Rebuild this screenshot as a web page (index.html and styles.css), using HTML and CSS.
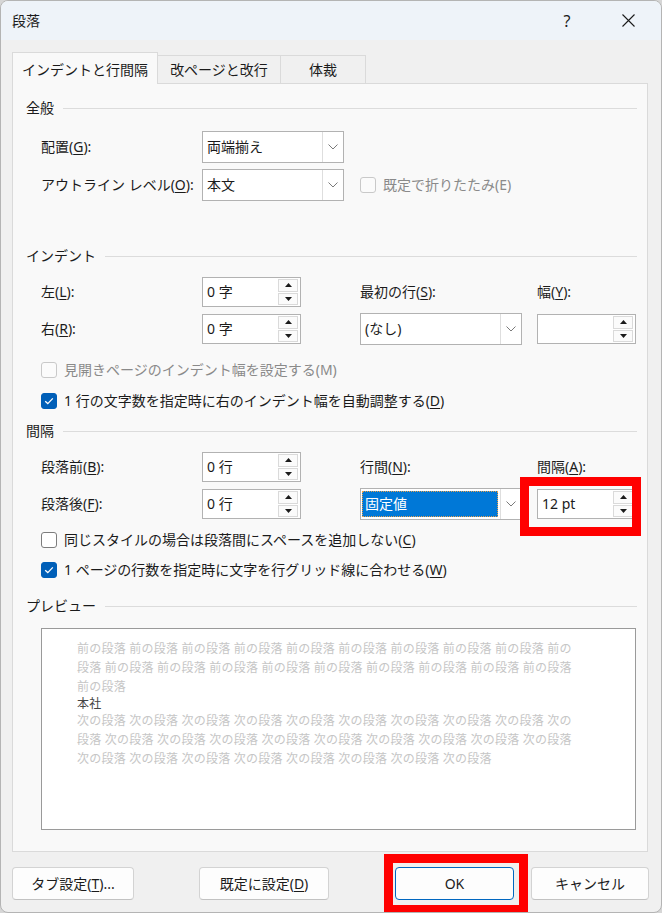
FILE: index.html
```html
<!DOCTYPE html>
<html lang="ja">
<head>
<meta charset="utf-8">
<title>段落</title>
<link rel="stylesheet" href="styles.css">
</head>
<body>
<div class="window">
  <div class="titlebar">
    <span class="title">段落</span>
    <span class="help">?</span>
    <span class="close"><svg width="13" height="13" viewBox="0 0 13 13"><path d="M0.5 0.5L12.5 12.5M12.5 0.5L0.5 12.5" stroke="#1b1b1b" stroke-width="1.1" fill="none"/></svg></span>
  </div>

  <div class="tabs">
    <div class="tab active t1">インデントと行間隔</div>
    <div class="tab t2">改ページと改行</div>
    <div class="tab t3">体裁</div>
  </div>

  <div class="panel">
    <div class="legend"><span>全般</span></div>
    <div class="grid general">
      <div class="lbl">配置(<u>G</u>):</div>
      <div class="combo short"><span class="ct">両端揃え</span><span class="ca"><svg width="10" height="6" viewBox="0 0 10 6"><path d="M0.5 0.5L5 5L9.5 0.5" stroke="#7a7a7a" stroke-width="1" fill="none"/></svg></span></div>
      <div></div>
      <div class="lbl">アウトライン レベル(<u>O</u>):</div>
      <div class="combo short"><span class="ct">本文</span><span class="ca"><svg width="10" height="6" viewBox="0 0 10 6"><path d="M0.5 0.5L5 5L9.5 0.5" stroke="#7a7a7a" stroke-width="1" fill="none"/></svg></span></div>
      <div class="check disabled"><span class="box"></span><span>既定で折りたたみ(E)</span></div>
    </div>

    <div class="legend gap-indent"><span>インデント</span></div>
    <div class="grid fields">
      <div class="lbl">左(<u>L</u>):</div>
      <div class="spin"><span class="val">0 字</span><span class="arrows"><span><svg width="7" height="4" viewBox="0 0 7 4"><path d="M0 4L3.5 0L7 4Z" fill="#1b1b1b"/></svg></span><span><svg width="7" height="4" viewBox="0 0 7 4"><path d="M0 0L3.5 4L7 0Z" fill="#1b1b1b"/></svg></span></span></div>
      <div class="lbl">最初の行(<u>S</u>):</div>
      <div class="lbl">幅(<u>Y</u>):</div>
      <div class="lbl">右(<u>R</u>):</div>
      <div class="spin"><span class="val">0 字</span><span class="arrows"><span><svg width="7" height="4" viewBox="0 0 7 4"><path d="M0 4L3.5 0L7 4Z" fill="#1b1b1b"/></svg></span><span><svg width="7" height="4" viewBox="0 0 7 4"><path d="M0 0L3.5 4L7 0Z" fill="#1b1b1b"/></svg></span></span></div>
      <div class="combo wide"><span class="ct">(なし)</span><span class="ca"><svg width="10" height="6" viewBox="0 0 10 6"><path d="M0.5 0.5L5 5L9.5 0.5" stroke="#7a7a7a" stroke-width="1" fill="none"/></svg></span></div>
      <div class="spin"><span class="val"></span><span class="arrows"><span><svg width="7" height="4" viewBox="0 0 7 4"><path d="M0 4L3.5 0L7 4Z" fill="#1b1b1b"/></svg></span><span><svg width="7" height="4" viewBox="0 0 7 4"><path d="M0 0L3.5 4L7 0Z" fill="#1b1b1b"/></svg></span></span></div>
    </div>

    <div class="checks c1">
      <div class="check disabled"><span class="box"></span><span>見開きページのインデント幅を設定する(M)</span></div>
      <div class="check checked"><span class="box"><svg width="12" height="12" viewBox="0 0 12 12"><path d="M2.2 6.2L4.8 8.6L9.8 3.4" stroke="#fff" stroke-width="1.3" fill="none"/></svg></span><span>1 行の文字数を指定時に右のインデント幅を自動調整する(<u>D</u>)</span></div>
    </div>

    <div class="legend gap-spacing"><span>間隔</span></div>
    <div class="grid fields">
      <div class="lbl">段落前(<u>B</u>):</div>
      <div class="spin"><span class="val">0 行</span><span class="arrows"><span><svg width="7" height="4" viewBox="0 0 7 4"><path d="M0 4L3.5 0L7 4Z" fill="#1b1b1b"/></svg></span><span><svg width="7" height="4" viewBox="0 0 7 4"><path d="M0 0L3.5 4L7 0Z" fill="#1b1b1b"/></svg></span></span></div>
      <div class="lbl">行間(<u>N</u>):</div>
      <div class="lbl">間隔(<u>A</u>):</div>
      <div class="lbl">段落後(<u>F</u>):</div>
      <div class="spin"><span class="val">0 行</span><span class="arrows"><span><svg width="7" height="4" viewBox="0 0 7 4"><path d="M0 4L3.5 0L7 4Z" fill="#1b1b1b"/></svg></span><span><svg width="7" height="4" viewBox="0 0 7 4"><path d="M0 0L3.5 4L7 0Z" fill="#1b1b1b"/></svg></span></span></div>
      <div class="combo wide sel"><span class="ct"><span class="hl">固定値</span></span><span class="ca"><svg width="10" height="6" viewBox="0 0 10 6"><path d="M0.5 0.5L5 5L9.5 0.5" stroke="#7a7a7a" stroke-width="1" fill="none"/></svg></span></div>
      <div class="spin"><span class="val">12 pt</span><span class="arrows"><span><svg width="7" height="4" viewBox="0 0 7 4"><path d="M0 4L3.5 0L7 4Z" fill="#1b1b1b"/></svg></span><span><svg width="7" height="4" viewBox="0 0 7 4"><path d="M0 0L3.5 4L7 0Z" fill="#1b1b1b"/></svg></span></span></div>
    </div>

    <div class="checks c2">
      <div class="check"><span class="box"></span><span>同じスタイルの場合は段落間にスペースを追加しない(<u>C</u>)</span></div>
      <div class="check checked"><span class="box"><svg width="12" height="12" viewBox="0 0 12 12"><path d="M2.2 6.2L4.8 8.6L9.8 3.4" stroke="#fff" stroke-width="1.3" fill="none"/></svg></span><span>1 ページの行数を指定時に文字を行グリッド線に合わせる(<u>W</u>)</span></div>
    </div>

    <div class="legend gap-preview"><span>プレビュー</span></div>
    <div class="preview">
      <div class="pv prev">前の段落 前の段落 前の段落 前の段落 前の段落 前の段落 前の段落 前の段落 前の段落 前の<br>段落 前の段落 前の段落 前の段落 前の段落 前の段落 前の段落 前の段落 前の段落 前の段落<br>前の段落</div>
      <div class="pv cur">本社</div>
      <div class="pv prev">次の段落 次の段落 次の段落 次の段落 次の段落 次の段落 次の段落 次の段落 次の段落 次の<br>段落 次の段落 次の段落 次の段落 次の段落 次の段落 次の段落 次の段落 次の段落 次の段落<br>次の段落 次の段落 次の段落 次の段落 次の段落 次の段落 次の段落 次の段落</div>
    </div>
  </div>

  <div class="btnrow">
    <div class="btn b1">タブ設定(<u>T</u>)...</div>
    <div class="btn b2">既定に設定(<u>D</u>)</div>
    <div class="btn b3 default">OK</div>
    <div class="btn b4">キャンセル</div>
  </div>

  <div class="mark mark-spacing"></div>
  <div class="mark mark-ok"></div>
</div>
</body>
</html>
```

FILE: styles.css
```css
* { box-sizing: border-box; }
html, body { margin: 0; padding: 0; }
body {
  background: #d6d6d6;
  font-family: "Noto Sans", "Noto Sans CJK JP", sans-serif;
  font-size: 14px;
  color: #1b1b1b;
}
u { text-underline-offset: 2px; }

.window {
  position: relative;
  width: 662px;
  height: 913px;
  border: 1px solid #b4b4b4;
  border-radius: 8px;
  background: #f0f0f0;
  overflow: hidden;
}

/* title bar */
.titlebar {
  display: flex;
  align-items: center;
  height: 39px;
  background: #eef3f9;
  padding: 0 10px 0 11px;
}
.title { flex: 1; line-height: 20px; }
.help { width: 46px; text-align: center; margin-right: 15px; font-size: 16px; line-height: 20px; }
.close { width: 46px; display: flex; justify-content: center; }

/* tabs */
.tabs {
  position: relative;
  z-index: 1;
  display: flex;
  align-items: flex-end;
  height: 31px;
  margin-top: 12px;
  padding-left: 11px;
}
.tab {
  height: 28px;
  margin-left: -1px;
  border: 1px solid #dadada;
  border-bottom: none;
  background: #f0f0f0;
  display: flex;
  align-items: center;
  justify-content: center;
  line-height: 20px;
}
.tab.active {
  height: 32px;
  margin-left: 0;
  margin-bottom: -1px;
  background: #f9f9f9;
  padding-top: 2px;
}
.t1 { width: 146px; }
.t2 { width: 124px; }
.t3 { width: 86px; }

/* panel */
.panel {
  margin-left: 11px;
  width: 636px;
  border: 1px solid #dadada;
  background: #f9f9f9;
  padding: 14px 10px 21px 13px;
}
.legend {
  display: flex;
  align-items: center;
  gap: 9px;
  height: 20px;
  line-height: 20px;
}
.legend::after {
  content: "";
  flex: 1;
  height: 1px;
  background: #dcdcdc;
}
.gap-indent { margin-top: 45px; }
.gap-spacing { margin-top: 8px; }
.gap-preview { margin-top: 14px; }

.grid {
  display: grid;
  margin-left: 15px;
  row-gap: 6px;
  align-items: center;
}
.general {
  grid-template-columns: 161px 158px 276px;
  grid-template-rows: 32px 32px;
  margin-top: 13px;
}
.fields {
  grid-template-columns: 161px 158px 177px 99px;
  grid-template-rows: 30px 32px;
  margin-top: 11px;
}
.lbl { line-height: 20px; white-space: nowrap; }

/* combo */
.combo {
  display: flex;
  height: 32px;
  border: 1px solid #b2b2b2;
  background: #fff;
}
.combo.short { width: 142px; }
.combo.wide { width: 162px; }
.ct {
  flex: 1;
  display: flex;
  align-items: center;
  padding-left: 4px;
  line-height: 20px;
}
.ca {
  width: 21px;
  border-left: 1px solid #dedede;
  display: flex;
  align-items: center;
  justify-content: center;
}
.combo.sel .ct { padding: 2px 2px 2px 1px; align-items: stretch; }
.hl {
  flex: 1;
  display: flex;
  align-items: center;
  padding-left: 2px;
  background: #0078d7;
  color: #fff;
  border: 1px dotted #e8a04c;
}

/* spin */
.spin {
  display: flex;
  width: 99px;
  height: 30px;
  border: 1px solid #b2b2b2;
  background: #fff;
}
.val {
  flex: 1;
  display: flex;
  align-items: center;
  padding-left: 4px;
  line-height: 20px;
}
.arrows {
  width: 20px;
  margin: 1px 2px 1px 0;
  display: flex;
  flex-direction: column;
  gap: 1px;
}
.arrows span {
  flex: 1;
  border: 1px solid #dadada;
  background: #fbfbfb;
  display: flex;
  align-items: center;
  justify-content: center;
}

/* checkboxes */
.checks {
  display: flex;
  flex-direction: column;
  margin-left: 15px;
}
.checks.c1 { margin-top: 13px; gap: 7px; }
.checks.c2 { margin-top: 8px; gap: 6px; }
.check {
  display: flex;
  align-items: center;
  gap: 7px;
  height: 24px;
  line-height: 20px;
  white-space: nowrap;
}
.general .check { grid-column: 3; }
.box {
  width: 16px;
  height: 16px;
  border: 1px solid #7d7d7d;
  border-radius: 3px;
  background: #fff;
  display: flex;
  align-items: center;
  justify-content: center;
  flex: none;
}
.check.disabled { color: #8a8a8a; }
.check.disabled .box { border-color: #c9c9c9; background: #fbfbfb; }
.check.checked .box { background: #005fb8; border-color: #005fb8; }

/* preview */
.preview {
  margin: 12px 0 0 15px;
  width: 595px;
  height: 202px;
  border: 1px solid #9a9a9a;
  background: #fff;
  padding: 11px 0 0 35px;
  font-family: "Liberation Serif", "Noto Sans CJK JP", serif;
  font-size: 12px;
  letter-spacing: 0.25px;
  white-space: nowrap;
}
.pv.prev { line-height: 19px; color: #c6c6c6; }
.pv.cur { line-height: 15px; color: #444; }

/* buttons */
.btnrow {
  display: flex;
  margin-top: 15px;
  padding-left: 11px;
}
.btn {
  height: 33px;
  border: 1px solid #d3d3d3;
  border-bottom-color: #c2c2c2;
  border-radius: 4px;
  background: #fdfdfd;
  display: flex;
  align-items: center;
  justify-content: center;
  line-height: 20px;
}
.btn.default { border: 1px solid #0067c0; }
.b1 { width: 122px; }
.b2 { width: 130px; margin-left: 65px; }
.b3 { width: 119px; margin-left: 66px; }
.b4 { width: 118px; margin-left: 17px; }

/* red annotation boxes */
.mark {
  position: absolute;
  border: 9px solid #ff0000;
}
.mark-spacing { left: 519px; top: 476px; width: 121px; height: 59px; }
.mark-ok { left: 383px; top: 853px; width: 144px; height: 60px; }
```
